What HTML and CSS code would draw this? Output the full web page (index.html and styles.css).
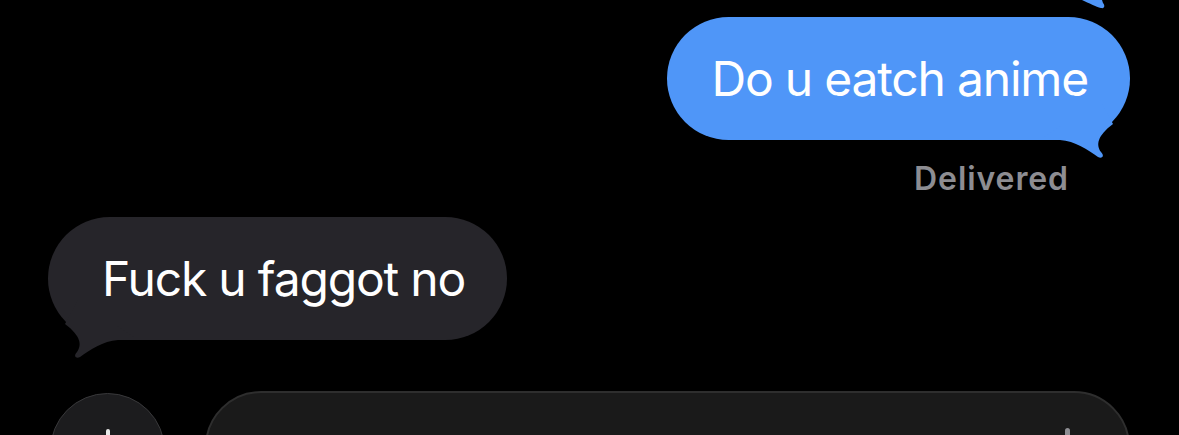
FILE: index.html
```html
<!DOCTYPE html>
<html lang="en">
<head>
  <meta charset="UTF-8">
  <meta name="viewport" content="width=device-width, initial-scale=1.0">
  <title>Messages</title>
  <link rel="stylesheet" href="styles.css">
</head>
<body>
  <div class="thread">
    <!-- tail of the previous sent bubble, scrolled off the top -->
    <div class="prev-tail">
      <svg width="24" height="9" viewBox="0 0 24 9">
        <path d="M0 0 C7 3 14 7 19 8 C23 9 23 5 21 3 L20 0 Z" fill="#4f96f8"/>
      </svg>
    </div>

    <div class="bubble bubble-sent">
      <span class="bubble-text">Do u eatch anime</span>
      <svg class="tail tail-sent" width="100" height="70" viewBox="0 0 100 70">
        <path d="M10 50 L30 50 C45 51 58 60 68 67 C72 69 75 66 71 62 C66 55 67 46 83 34 L70 10 Z" fill="#4f96f8"/>
      </svg>
    </div>
    <div class="status">Delivered</div>

    <div class="bubble bubble-received">
      <span class="bubble-text">Fuck u faggot no</span>
      <svg class="tail tail-received" width="100" height="70" viewBox="0 0 100 70">
        <path d="M90 50 L70 50 C55 51 42 60 32 67 C28 69 25 66 29 62 C34 55 33 46 17 34 L30 10 Z" fill="#26252a"/>
      </svg>
    </div>
  </div>

  <div class="compose">
    <div class="apps-btn">
      <span class="plus"></span>
    </div>
    <div class="input">
      <span class="placeholder">iMessage</span>
      <span class="mic"></span>
    </div>
  </div>
</body>
</html>
```

FILE: styles.css
```css
* {
  margin: 0;
  padding: 0;
  box-sizing: border-box;
}

html,
body {
  background: #000;
}

body {
  width: 1179px;
  height: 435px;
  overflow: hidden;
  font-family: Inter, "Noto Sans", sans-serif;
  color: #fff;
}

.thread {
  display: flex;
  flex-direction: column;
}

.prev-tail {
  display: flex;
  justify-content: flex-end;
  padding-right: 73px;
  height: 9px;
}

.prev-tail svg {
  display: block;
}

.bubble {
  position: relative;
  display: flex;
  align-items: center;
  height: 123px;
  border-radius: 62px;
  font-size: 48px;
  letter-spacing: -1.2px;
  white-space: nowrap;
}

.bubble-text {
  position: relative;
  z-index: 1;
}

.bubble-sent {
  align-self: flex-end;
  margin-top: 8px;
  margin-right: 49px;
  padding: 0 42px 0 44px;
  background: #4f96f8;
}

.bubble-received {
  align-self: flex-start;
  margin-top: 20px;
  margin-left: 48px;
  padding: 0 42px 0 54px;
  background: #26252a;
}

.tail {
  position: absolute;
  bottom: -20px;
}

.tail-sent {
  right: 0;
}

.tail-received {
  left: 0;
}

.status {
  align-self: flex-end;
  margin-right: 110px;
  margin-top: 20px;
  font-size: 32px;
  line-height: 37px;
  letter-spacing: 0.9px;
  font-weight: 600;
  color: #8d8d92;
}

.compose {
  display: flex;
  align-items: flex-start;
  gap: 40px;
  margin-top: 51px;
  padding-left: 50px;
}

.apps-btn {
  flex: none;
  width: 115px;
  height: 115px;
  margin-top: 2px;
  border-radius: 50%;
  background: #1c1c1e;
  border: 1.5px solid #38383a;
  display: flex;
  justify-content: center;
}

.plus {
  width: 4px;
  height: 40px;
  margin-top: 35px;
  border-radius: 2px;
  background: #e8e8e8;
}

.input {
  flex: none;
  width: 925px;
  height: 115px;
  border-radius: 56px;
  background: #1a1a1a;
  border: 2px solid #2e2e2e;
  display: flex;
  justify-content: space-between;
  padding: 0 58px 0 50px;
}

.placeholder {
  margin-top: 35px;
  font-size: 40px;
  line-height: 48px;
  color: #6b6b70;
}

.mic {
  width: 5px;
  height: 30px;
  margin-top: 35px;
  border-radius: 3px;
  background: #8e8e93;
}
```
